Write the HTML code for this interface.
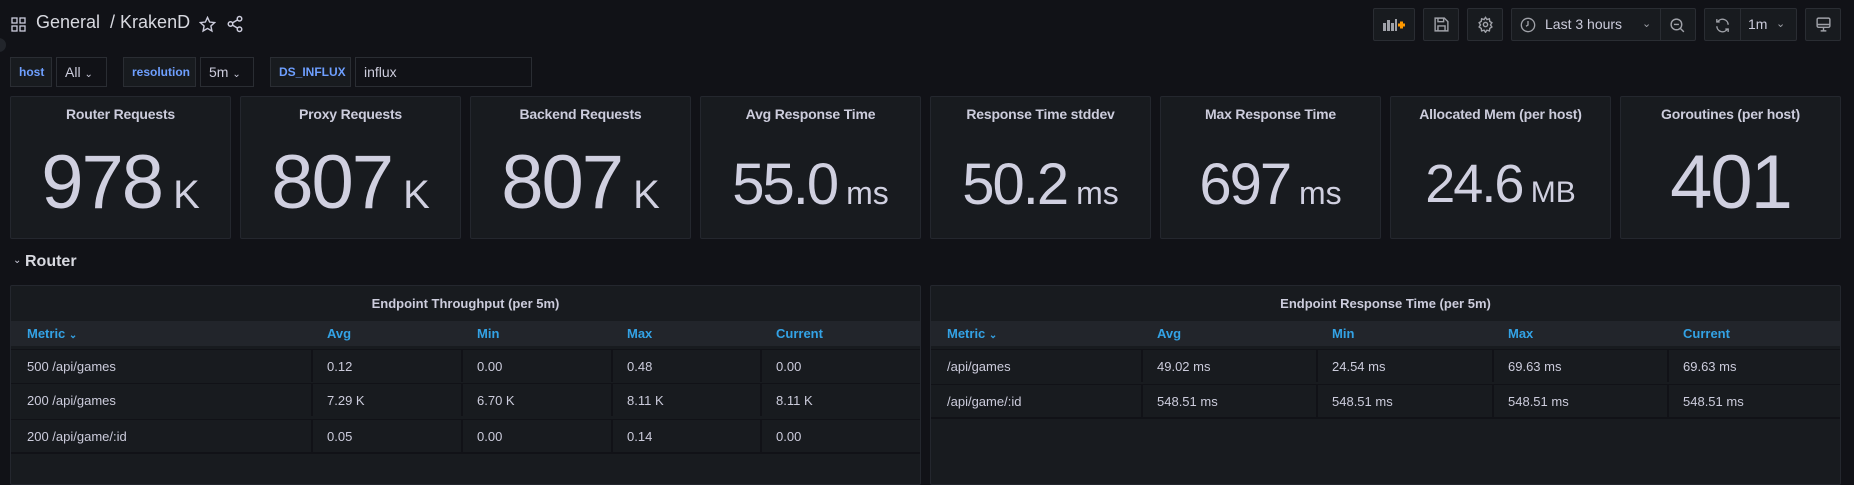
<!DOCTYPE html>
<html><head><meta charset="utf-8"><style>
*{box-sizing:border-box;margin:0;padding:0}
body{width:1854px;height:475px;background:#111217;font-family:"Liberation Sans",sans-serif;color:#ccccdc;position:relative;overflow:hidden}
.abs{position:absolute}
.btn{position:absolute;top:8px;height:33px;background:#181b1f;border:1px solid #2a2d33;border-radius:2px}
.var{position:absolute;top:57px;height:30px;border:1px solid #2a2d33;background:#111217;font-size:14px;line-height:28px;padding:0 8px}
.lbl{background:#181b1f;color:#6e9fff;font-size:12px;font-weight:bold}
.stat{position:absolute;top:96px;width:221px;height:143px;background:#181b1f;border:1px solid #24272e;border-radius:2px;text-align:center}
.stat .t{margin-top:9px;font-size:14px;font-weight:bold;color:#ccccdc;letter-spacing:-0.2px}
.stat .v{position:absolute;left:0;right:0;color:#d0d0e0;white-space:nowrap;letter-spacing:-2px}
.tbl{position:absolute;top:285px;height:200px;background:#181b1f;border:1px solid #24272e;border-radius:2px;overflow:hidden}
.tbl .tt{height:34px;text-align:center;font-size:13px;font-weight:bold;line-height:36px}
.tbl .hd{position:absolute;top:35px;left:0;right:0;height:25px;background:#22252b;font-size:13px;color:#33a2e5;font-weight:bold}
.tbl .row{position:absolute;left:0;right:0;height:33px;border-top:1px solid #111217;font-size:13px;color:#ccccdc}
.tbl span{position:absolute;line-height:25px}
.row span{line-height:33px}
.sep{position:absolute;top:0;bottom:0;width:2px;background:#111217}
</style></head><body>
<!-- header -->
<svg class="abs" style="left:11px;top:17px" width="15" height="15" viewBox="0 0 15 15" fill="none" stroke="#ccccdc" stroke-width="1.3"><rect x="1" y="1" width="5" height="5"/><rect x="9" y="1" width="5" height="5"/><rect x="1" y="9" width="5" height="5"/><rect x="9" y="9" width="5" height="5"/></svg>
<div class="abs" style="left:36px;top:12px;font-size:18px;color:#d8d9e0">General &nbsp;/ KrakenD</div>
<svg class="abs" style="left:199px;top:16px" width="17" height="17" viewBox="0 0 24 24" fill="none" stroke="#ccccdc" stroke-width="2"><path d="M12 2l3 6.5 7 .8-5.2 4.8 1.4 7-6.2-3.6-6.2 3.6 1.4-7L2 9.3l7-.8z"/></svg>
<svg class="abs" style="left:226px;top:15px" width="18" height="18" viewBox="0 0 24 24" fill="none" stroke="#ccccdc" stroke-width="2"><circle cx="18" cy="5" r="3"/><circle cx="6" cy="12" r="3"/><circle cx="18" cy="19" r="3"/><path d="M8.6 13.5l6.8 4M15.4 6.5l-6.8 4"/></svg>
<div class="abs" style="left:-8px;top:38px;width:14px;height:14px;border-radius:50%;background:#22252b"></div>

<div class="btn" style="left:1373px;width:42px"><svg style="position:absolute;left:8px;top:8px" width="24" height="16"><rect x="1" y="6" width="3" height="8" fill="#9fa1a8"/><rect x="5" y="3" width="3" height="11" fill="#9fa1a8"/><rect x="9" y="6" width="3" height="8" fill="#9fa1a8"/><rect x="13" y="2" width="2" height="12" fill="#9fa1a8"/><path d="M16 8h7M19.5 4.5v7" stroke="#ff9900" stroke-width="3"/></svg></div>
<div class="btn" style="left:1423px;width:36px"><svg style="position:absolute;left:9px;top:7px" width="17" height="17" viewBox="0 0 24 24" fill="none" stroke="#9fa1a8" stroke-width="2"><path d="M5 3h11l5 5v13H3V3z"/><path d="M7 3v5h8V3M7 21v-7h10v7"/></svg></div>
<div class="btn" style="left:1467px;width:36px"><svg style="position:absolute;left:9px;top:7px" width="17" height="17" viewBox="0 0 24 24" fill="none" stroke="#9fa1a8" stroke-width="2"><circle cx="12" cy="12" r="3"/><path d="M12 2l2 3 3.5-1 .5 3.5 3 2-2 3 2 3-3 2-.5 3.5-3.5-1-2 3-2-3-3.5 1-.5-3.5-3-2 2-3-2-3 3-2 .5-3.5 3.5 1z"/></svg></div>
<div class="btn" style="left:1511px;width:185px">
<svg style="position:absolute;left:8px;top:8px" width="16" height="16" viewBox="0 0 24 24" fill="none" stroke="#9fa1a8" stroke-width="2"><circle cx="12" cy="12" r="10"/><path d="M12 6v6l-3 2"/></svg>
<span style="position:absolute;left:33px;top:0;line-height:31px;font-size:14px;color:#ccccdc">Last 3 hours</span>
<span style="position:absolute;left:130px;top:0;line-height:31px;font-size:11px;color:#9fa1a8">&#8964;</span>
<div style="position:absolute;left:148px;top:0;width:1px;height:31px;background:#2a2d33"></div>
<svg style="position:absolute;left:157px;top:8px" width="17" height="17" viewBox="0 0 24 24" fill="none" stroke="#9fa1a8" stroke-width="2"><circle cx="10.5" cy="10.5" r="7.5"/><path d="M16 16l5 5M7 10.5h7"/></svg></div>
<div class="btn" style="left:1704px;width:93px">
<svg style="position:absolute;left:9px;top:8px" width="17" height="17" viewBox="0 0 24 24" fill="none" stroke="#9fa1a8" stroke-width="2"><path d="M20 11a8 8 0 0 0-14.5-4.5M4 3v4h4M4 13a8 8 0 0 0 14.5 4.5M20 21v-4h-4"/></svg>
<div style="position:absolute;left:35px;top:0;width:1px;height:31px;background:#2a2d33"></div>
<span style="position:absolute;left:43px;line-height:31px;font-size:14px">1m</span>
<span style="position:absolute;left:71px;line-height:31px;font-size:11px;color:#9fa1a8">&#8964;</span></div>
<div class="btn" style="left:1805px;width:36px"><svg style="position:absolute;left:9px;top:7px" width="17" height="17" viewBox="0 0 24 24" fill="none" stroke="#9fa1a8" stroke-width="2"><rect x="3" y="3" width="18" height="13" rx="2"/><path d="M3 12h18M8 21h8M12 16v5"/></svg></div>

<!-- variables -->
<div class="var lbl" style="left:10px;width:42px">host</div>
<div class="var" style="left:56px;width:51px">All <span style="font-size:10px">&#8964;</span></div>
<div class="var lbl" style="left:123px;width:73px">resolution</div>
<div class="var" style="left:200px;width:54px">5m <span style="font-size:10px">&#8964;</span></div>
<div class="var lbl" style="left:270px;width:81px">DS_INFLUX</div>
<div class="var" style="left:355px;width:177px">influx</div>

<!-- stats -->
<div class="stat" style="left:10px"><div class="t">Router Requests</div><div class="v" style="top:42px;font-size:76px">978<span style="font-size:40px;letter-spacing:0"> K</span></div></div>
<div class="stat" style="left:240px"><div class="t">Proxy Requests</div><div class="v" style="top:42px;font-size:76px">807<span style="font-size:40px;letter-spacing:0"> K</span></div></div>
<div class="stat" style="left:470px"><div class="t">Backend Requests</div><div class="v" style="top:42px;font-size:76px">807<span style="font-size:40px;letter-spacing:0"> K</span></div></div>
<div class="stat" style="left:700px"><div class="t">Avg Response Time</div><div class="v" style="top:54px;font-size:58px">55.0<span style="font-size:32px;letter-spacing:0"> ms</span></div></div>
<div class="stat" style="left:930px"><div class="t">Response Time stddev</div><div class="v" style="top:54px;font-size:58px">50.2<span style="font-size:32px;letter-spacing:0"> ms</span></div></div>
<div class="stat" style="left:1160px"><div class="t">Max Response Time</div><div class="v" style="top:54px;font-size:58px">697<span style="font-size:32px;letter-spacing:0"> ms</span></div></div>
<div class="stat" style="left:1390px"><div class="t">Allocated Mem (per host)</div><div class="v" style="top:56px;font-size:54px">24.6<span style="font-size:30px;letter-spacing:0"> MB</span></div></div>
<div class="stat" style="left:1620px"><div class="t">Goroutines (per host)</div><div class="v" style="top:42px;font-size:76px">401</div></div>

<!-- router -->
<div class="abs" style="left:13px;top:255px;font-size:10px">&#8964;</div>
<div class="abs" style="left:25px;top:253px;font-size:16px;font-weight:bold;color:#d8d9e0">Router</div>

<div class="tbl" style="left:10px;width:911px">
<div class="tt">Endpoint Throughput (per 5m)</div>
<div class="hd"><span style="left:16px">Metric <span style="position:static;font-size:10px">&#8964;</span></span><span style="left:316px">Avg</span><span style="left:466px">Min</span><span style="left:616px">Max</span><span style="left:765px">Current</span></div>
<div class="row" style="top:63px"><span style="left:16px">500 /api/games</span><span style="left:316px">0.12</span><span style="left:466px">0.00</span><span style="left:616px">0.48</span><span style="left:765px">0.00</span><div class="sep" style="left:300px"></div><div class="sep" style="left:450px"></div><div class="sep" style="left:600px"></div><div class="sep" style="left:749px"></div></div>
<div class="row" style="top:97px"><span style="left:16px">200 /api/games</span><span style="left:316px">7.29 K</span><span style="left:466px">6.70 K</span><span style="left:616px">8.11 K</span><span style="left:765px">8.11 K</span><div class="sep" style="left:300px"></div><div class="sep" style="left:450px"></div><div class="sep" style="left:600px"></div><div class="sep" style="left:749px"></div></div>
<div class="row" style="top:133px;height:35px;border-bottom:2px solid #111217"><span style="left:16px">200 /api/game/:id</span><span style="left:316px">0.05</span><span style="left:466px">0.00</span><span style="left:616px">0.14</span><span style="left:765px">0.00</span><div class="sep" style="left:300px"></div><div class="sep" style="left:450px"></div><div class="sep" style="left:600px"></div><div class="sep" style="left:749px"></div></div>
</div>

<div class="tbl" style="left:930px;width:911px">
<div class="tt">Endpoint Response Time (per 5m)</div>
<div class="hd"><span style="left:16px">Metric <span style="position:static;font-size:10px">&#8964;</span></span><span style="left:226px">Avg</span><span style="left:401px">Min</span><span style="left:577px">Max</span><span style="left:752px">Current</span></div>
<div class="row" style="top:63px"><span style="left:16px">/api/games</span><span style="left:226px">49.02 ms</span><span style="left:401px">24.54 ms</span><span style="left:577px">69.63 ms</span><span style="left:752px">69.63 ms</span><div class="sep" style="left:210px"></div><div class="sep" style="left:385px"></div><div class="sep" style="left:561px"></div><div class="sep" style="left:736px"></div></div>
<div class="row" style="top:98px;height:35px;border-bottom:2px solid #111217"><span style="left:16px">/api/game/:id</span><span style="left:226px">548.51 ms</span><span style="left:401px">548.51 ms</span><span style="left:577px">548.51 ms</span><span style="left:752px">548.51 ms</span><div class="sep" style="left:210px"></div><div class="sep" style="left:385px"></div><div class="sep" style="left:561px"></div><div class="sep" style="left:736px"></div></div>
</div>
</body></html>
